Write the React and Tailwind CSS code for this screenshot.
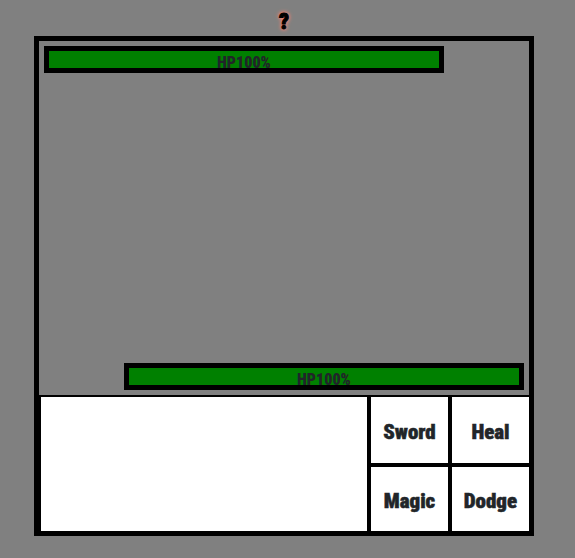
const actions = ["Sword", "Heal", "Magic", "Dodge"];

function HealthBar({ label, value, className }) {
  return (
    <div
      role="progressbar"
      aria-label={label}
      aria-valuenow={value}
      aria-valuemin={0}
      aria-valuemax={100}
      className={`h-[27px] w-5/6 border-[5px] border-black ${className}`}
    >
      <div
        className="h-full bg-[#008000] text-center text-base leading-6 font-black whitespace-nowrap text-[#212529]"
        style={{ width: `${value}%` }}
      >
        HP{value}%
      </div>
    </div>
  );
}

export default function App() {
  return (
    <main className="flex min-h-screen flex-col items-center bg-[#808080] pt-1 pr-[7px] font-['Impact','Roboto_Condensed','Liberation_Sans_Narrow',sans-serif]">
      <h1 className="h-8 text-[22px] leading-9 font-black text-black [-webkit-text-stroke:1px_black] [text-shadow:0_0_3px_#fa8072,0_0_4px_#fa8072,0_0_5px_#fa8072]">
        ?
      </h1>
      <section className="flex w-full max-w-[500px] flex-col border-[5px] border-black">
        <div className="flex h-[354px] flex-col justify-between p-[5px]">
          <HealthBar label="Enemy health" value={100} className="" />
          <HealthBar label="Player health" value={100} className="self-end" />
        </div>
        <div className="flex h-[136px] border-t-2 border-l-2 border-black">
          <div className="min-w-0 grow bg-white" aria-live="polite" />
          <div className="grid w-[162px] shrink-0 grid-cols-2 grid-rows-[66px_64px] gap-1 border-l-4 border-black bg-black">
            {actions.map((name) => (
              <button
                key={name}
                type="button"
                className="bg-white pt-[5px] text-[21px] font-black text-[#212529] [-webkit-text-stroke:0.5px_#212529]"
              >
                {name}
              </button>
            ))}
          </div>
        </div>
      </section>
    </main>
  );
}
